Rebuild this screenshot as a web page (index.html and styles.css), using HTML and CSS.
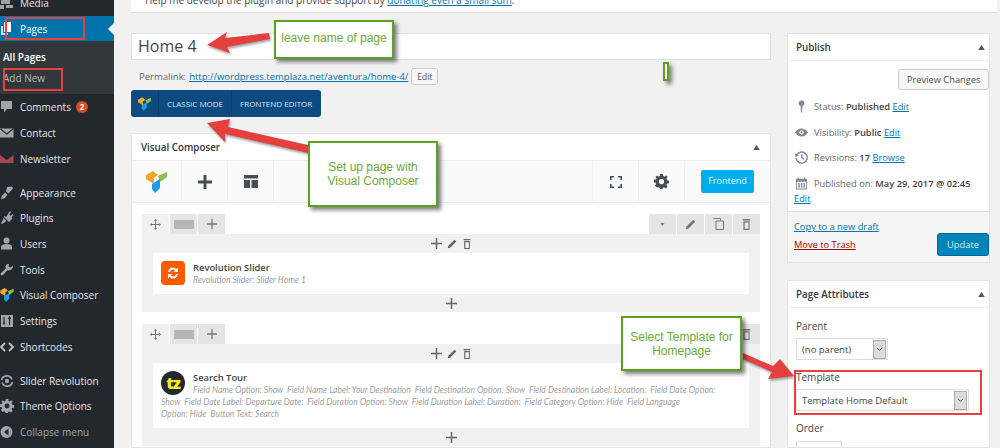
FILE: index.html
```html
<!DOCTYPE html>
<html lang="en">
<head>
    <meta charset="UTF-8">
    <meta name="viewport" content="width=device-width, initial-scale=1.0">
    <title>Edit Page</title>
    <link rel="stylesheet" href="styles.css">
</head>
<body>
    <svg class="defs" width="0" height="0">
        <symbol id="vc-logo" viewBox="0 0 21 22">
            <polygon points="0,4 7,0 12,4 8,7 8,13 0,8" fill="#f0a630"/>
            <polygon points="12,5 21,1 21,6 14,11" fill="#8cc04b"/>
            <polygon points="6,13 14,8 14,17 9,22 6,18" fill="#1b9ee2"/>
        </symbol>
        <symbol id="plus" viewBox="0 0 12 12">
            <path d="M5.200 0h1.600v5.200H12v1.600H6.800V12H5.200V6.800H0V5.200h5.200z" fill="currentColor"/>
        </symbol>
        <symbol id="pencil" viewBox="0 0 12 12">
            <path d="M9 0.8l2.200 2.200-7.400 7.400L.8 11.200l.8-3z" fill="currentColor"/>
        </symbol>
        <symbol id="trash" viewBox="0 0 12 12">
            <path d="M2 0h8v1.600H2zM3 2.500h6.400V12H2.600V2.500zM4 3.800v6.900h4.200V3.800z" fill="currentColor" fill-rule="evenodd"/>
        </symbol>
        <symbol id="move" viewBox="0 0 12 12">
            <path d="M6 0l1.800 2H6.500v3.500H10V4.200L12 6l-2 1.800V6.500H6.500V10h1.300L6 12l-1.800-2h1.300V6.500H2v1.300L0 6l2-1.800v1.300h3.500V2H4.200z" fill="currentColor"/>
        </symbol>
        <symbol id="gear" viewBox="0 0 16 16">
            <path d="M6.600 0h2.800l.4 2.200 1.300.6L13 1.500l1.500 1.500-1.300 1.900.9 1.800 1.900.4v2.800l-2.200.4-.6 1.300 1.300 1.900-2 2-1.900-1.300-1.300.6-.4 2.200H6.600l-.4-2.200-1.300-.6L3 14.500l-2-2 1.300-1.900-.6-1.300L0 8.900V6.100l2.200-.4.6-1.300L1.500 3 3 1.500l1.900 1.300 1.300-.6zM8 5.200a2.800 2.800 0 1 0 0 5.600 2.800 2.800 0 0 0 0-5.600z" fill="currentColor" fill-rule="evenodd"/>
        </symbol>
        <symbol id="caret" viewBox="0 0 8 6">
            <path d="M4 0l4 6H0z" fill="currentColor"/>
        </symbol>
        <symbol id="chevron" viewBox="0 0 8 6">
            <path d="M1 1l3 3 3-3" fill="none" stroke="#555" stroke-width="1.2"/>
        </symbol>
    </svg>

    <nav class="sidebar">
        <ul class="menu">
            <li class="menu-item">
                <svg class="menu-icon" viewBox="0 0 14 14"><path d="M1 0h9v8H1zM6 9h7v3H6zM0 9h4v4H0z" fill="#9ea3a8"/></svg>
                <span>Media</span>
            </li>
            <li class="menu-item current">
                <svg class="menu-icon" viewBox="0 0 14 14"><path d="M1 4h2v7h5v2H1z" fill="#cfe3ee"/><path d="M4 0h7v10H4z" fill="#fff"/></svg>
                <span>Pages</span>
                <span class="menu-pointer"></span>
            </li>
            <li class="submenu">
                <div class="submenu-item active">All Pages</div>
                <div class="submenu-item">Add New</div>
            </li>
            <li class="menu-item">
                <svg class="menu-icon" viewBox="0 0 14 14"><path d="M1 1h11v8H7l-3 3.500V9H1z" fill="#a0a5aa"/></svg>
                <span>Comments</span>
                <span class="count">2</span>
            </li>
            <li class="menu-item">
                <svg class="menu-icon" viewBox="0 0 14 14"><path d="M0 2.500h13.500v9H0z" fill="#a0a5aa"/><path d="M.5 3l6.300 5L13 3" fill="none" stroke="#23282d" stroke-width="1.100"/></svg>
                <span>Contact</span>
            </li>
            <li class="menu-item">
                <svg class="menu-icon" viewBox="0 0 14 14"><path d="M0 3l6.800 5L13.500 3v8H0z" fill="#a6464f"/></svg>
                <span>Newsletter</span>
            </li>
            <li class="menu-item group-start">
                <svg class="menu-icon" viewBox="0 0 14 14"><path d="M7 1l5-.5 1 2-4.500 5-2.500-2zM5 6.500l2.500 2.300L5 12l-4 1.500.8-3.500z" fill="#a0a5aa"/></svg>
                <span>Appearance</span>
            </li>
            <li class="menu-item">
                <svg class="menu-icon" viewBox="0 0 14 14"><path d="M10 0l1.200 1-2 2.500 1.500 1.300L12.500 3l1 1-2 2.500 1 1L9 11 3.500 5.500 4.500 5l1.500 1z" fill="#a0a5aa"/><path d="M3.500 7l3 3-2 1.500L2 13l-1-1 1.500-2.300z" fill="#a0a5aa"/></svg>
                <span>Plugins</span>
            </li>
            <li class="menu-item">
                <svg class="menu-icon" viewBox="0 0 14 14"><circle cx="6.500" cy="3.500" r="3" fill="#a0a5aa"/><path d="M1 12.500V9.500c0-1.500 2.500-2.500 5.500-2.500s5.500 1 5.500 2.500v3z" fill="#a0a5aa"/></svg>
                <span>Users</span>
            </li>
            <li class="menu-item">
                <svg class="menu-icon" viewBox="0 0 14 14"><path d="M13 2.500l-2.500 2-2-1L9 1C7 .5 5.500 2 5.500 4c0 .7.200 1 .3 1.500L1 10c-1.200 1.500.5 3.200 2 2l4.500-4.800c2.800.8 5.800-1.200 5.500-4.700z" fill="#a0a5aa"/></svg>
                <span>Tools</span>
            </li>
            <li class="menu-item">
                <svg class="menu-icon"><use href="#vc-logo"/></svg>
                <span>Visual Composer</span>
            </li>
            <li class="menu-item">
                <svg class="menu-icon" viewBox="0 0 14 14"><path d="M1 1h12v12H1z" fill="#a0a5aa"/><path d="M4 3v8M3 9h2.200M9.500 11V3M8.300 5l1.200-2 1.200 2" fill="none" stroke="#23282d" stroke-width="1.200"/></svg>
                <span>Settings</span>
            </li>
            <li class="menu-item">
                <svg class="menu-icon" viewBox="0 0 14 14"><path d="M5 3L1 7l4 4M9 3l4 4-4 4" fill="none" stroke="#c5c8cb" stroke-width="1.800"/></svg>
                <span>Shortcodes</span>
            </li>
            <li class="menu-item group-start">
                <svg class="menu-icon" viewBox="0 0 14 14"><path d="M1.500 6A5.500 5.500 0 0 1 12 5.500M12.500 8A5.500 5.500 0 0 1 2 8.500" fill="none" stroke="#a0a5aa" stroke-width="1.700"/><circle cx="7" cy="7" r="2.200" fill="#a0a5aa"/></svg>
                <span>Slider Revolution</span>
            </li>
            <li class="menu-item">
                <svg class="menu-icon gear-icon"><use href="#gear"/></svg>
                <span>Theme Options</span>
            </li>
            <li class="menu-item muted">
                <svg class="menu-icon" viewBox="0 0 14 14"><circle cx="6.500" cy="7" r="6" fill="#a0a5aa"/><path d="M8.500 3.500v7L4 7z" fill="#23282d"/></svg>
                <span>Collapse menu</span>
            </li>
        </ul>
    </nav>

    <main class="content">
        <div class="notice">Help me develop the plugin and provide support by <a href="#">donating even a small sum</a>.</div>

        <div class="columns">
            <div class="col-main">
                <div class="title-input">Home 4</div>
                <div class="permalink">
                    <span>Permalink:</span>
                    <a href="#">http://wordpress.templaza.net/aventura/home-4/</a>
                    <span class="mini-btn">Edit</span>
                </div>

                <div class="vc-switch">
                    <span class="vc-switch-logo"><svg width="13" height="14"><use href="#vc-logo"/></svg></span>
                    <span class="vc-switch-cell">CLASSIC MODE</span>
                    <span class="vc-switch-cell">FRONTEND EDITOR</span>
                </div>

                <section class="box vc-box">
                    <header class="box-head">
                        <h2>Visual Composer</h2>
                        <svg class="box-caret"><use href="#caret"/></svg>
                    </header>
                    <div class="vc-toolbar">
                        <span class="tool tool-logo"><svg width="21" height="22"><use href="#vc-logo"/></svg></span>
                        <span class="tool">
                            <svg width="14" height="14" viewBox="0 0 14 14"><path d="M5.500 0h3v5.500H14v3H8.500V14h-3V8.500H0v-3h5.500z" fill="#444e57"/></svg>
                        </span>
                        <span class="tool">
                            <svg width="14" height="13" viewBox="0 0 14 13"><path d="M0 0h14v3.500H0zM0 5h6v8H0zM7.500 5H14v8H7.500z" fill="#444e57"/></svg>
                        </span>
                        <span class="toolbar-space"></span>
                        <span class="tool">
                            <svg width="12" height="12" viewBox="0 0 12 12"><path d="M.8 4V.8H4M8 .8h3.200V4M11.200 8v3.200H8M4 11.200H.8V8" fill="none" stroke="#444e57" stroke-width="1.600"/></svg>
                        </span>
                        <span class="tool">
                            <svg class="tool-gear" width="15" height="15"><use href="#gear"/></svg>
                        </span>
                        <span class="frontend-btn">Frontend</span>
                    </div>

                    <div class="vc-rows">
                        <div class="vc-row">
                            <div class="row-controls">
                                <span class="ctl ctl-move"><svg width="11" height="11"><use href="#move"/></svg></span>
                                <span class="ctl"><span class="layout-bar"></span></span>
                                <span class="ctl"><svg width="10" height="10"><use href="#plus"/></svg></span>
                                <span class="row-controls-space"></span>
                                <span class="ctl"><svg width="5" height="3" class="down"><use href="#caret"/></svg></span>
                                <span class="ctl"><svg width="11" height="11"><use href="#pencil"/></svg></span>
                                <span class="ctl"><svg width="11" height="12" viewBox="0 0 11 12"><path d="M.5.500h7v2M3 3h7.500v8.500H3z" fill="none" stroke="currentColor"/></svg></span>
                                <span class="ctl"><svg width="11" height="11"><use href="#trash"/></svg></span>
                            </div>
                            <div class="row-body">
                                <div class="col-controls">
                                    <svg width="11" height="11"><use href="#plus"/></svg>
                                    <svg width="10" height="10"><use href="#pencil"/></svg>
                                    <svg width="10" height="10"><use href="#trash"/></svg>
                                </div>
                                <div class="card">
                                    <span class="card-icon rev-icon">
                                        <svg width="14" height="14" viewBox="0 0 14 14"><path d="M2 6a5 5 0 0 1 8.500-3l1.500-1.500V6H7.500l1.600-1.600A3 3 0 0 0 4 6zM12 8a5 5 0 0 1-8.500 3L2 12.500V8h4.500l-1.600 1.600A3 3 0 0 0 10 8z" fill="#fff"/></svg>
                                    </span>
                                    <div class="card-title">Revolution Slider</div>
                                    <div class="card-desc">Revolution Slider: Slider Home 1</div>
                                </div>
                                <div class="row-add"><svg width="11" height="11"><use href="#plus"/></svg></div>
                            </div>
                        </div>

                        <div class="vc-row">
                            <div class="row-controls">
                                <span class="ctl ctl-move"><svg width="11" height="11"><use href="#move"/></svg></span>
                                <span class="ctl"><span class="layout-bar"></span></span>
                                <span class="ctl"><svg width="10" height="10"><use href="#plus"/></svg></span>
                                <span class="row-controls-space"></span>
                                <span class="ctl"><svg width="5" height="3" class="down"><use href="#caret"/></svg></span>
                                <span class="ctl"><svg width="11" height="11"><use href="#pencil"/></svg></span>
                                <span class="ctl"><svg width="11" height="12" viewBox="0 0 11 12"><path d="M.5.500h7v2M3 3h7.500v8.500H3z" fill="none" stroke="currentColor"/></svg></span>
                                <span class="ctl"><svg width="11" height="11"><use href="#trash"/></svg></span>
                            </div>
                            <div class="row-body">
                                <div class="col-controls">
                                    <svg width="11" height="11"><use href="#plus"/></svg>
                                    <svg width="10" height="10"><use href="#pencil"/></svg>
                                    <svg width="10" height="10"><use href="#trash"/></svg>
                                </div>
                                <div class="card">
                                    <span class="card-icon tz-icon">tz</span>
                                    <div class="card-title">Search Tour</div>
                                    <div class="card-desc">Field Name Option: Show&nbsp; Field Name Label: Your Destination&nbsp; Field Destination Option: Show&nbsp; Field Destination Label: Location:&nbsp; Field Date Option:<br>Show&nbsp; Field Date Label: Departure Date:&nbsp; Field Duration Option: Show&nbsp; Field Duration Label: Duration:&nbsp; Field Category Option: Hide&nbsp; Field Language<br>Option: Hide&nbsp; Button Text: Search</div>
                                </div>
                                <div class="row-add"><svg width="11" height="11"><use href="#plus"/></svg></div>
                            </div>
                        </div>
                    </div>
                </section>
            </div>

            <aside class="col-side">
                <section class="box">
                    <header class="box-head">
                        <h2>Publish</h2>
                        <svg class="box-caret"><use href="#caret"/></svg>
                    </header>
                    <div class="publish-top"><span class="btn">Preview Changes</span></div>
                    <div class="misc">
                        <svg class="misc-icon" viewBox="0 0 14 14"><circle cx="7" cy="3.500" r="3" fill="#82878c"/><path d="M6 6h2l-.5 7.500h-1z" fill="#82878c"/></svg>
                        <span>Status: <b>Published</b> <a href="#">Edit</a></span>
                    </div>
                    <div class="misc">
                        <svg class="misc-icon" viewBox="0 0 14 14"><path d="M0 7c2-3 4.300-4.200 7-4.200S12 4 14 7c-2 3-4.300 4.200-7 4.200S2 10 0 7z" fill="#82878c"/><circle cx="7" cy="6.800" r="2.300" fill="#fff"/><circle cx="7" cy="6.800" r="1.200" fill="#82878c"/></svg>
                        <span>Visibility: <b>Public</b> <a href="#">Edit</a></span>
                    </div>
                    <div class="misc">
                        <svg class="misc-icon" viewBox="0 0 14 14"><path d="M2 4a6 6 0 1 1-.8 3.500" fill="none" stroke="#82878c" stroke-width="1.500"/><path d="M0 2.500l4.200 2.300L.5 6.500zM6.500 3.500H8v3.300l2.300 1.500-.7 1.100-3.100-2z" fill="#82878c"/></svg>
                        <span>Revisions: <b>17</b> <a href="#">Browse</a></span>
                    </div>
                    <div class="misc">
                        <svg class="misc-icon" viewBox="0 0 14 14"><path d="M1 2h12v11.500H1zM2 5v7.500h10V5z" fill="#82878c" fill-rule="evenodd"/><path d="M3 .5h1.200V3H3zM9.800.500H11V3H9.800zM3.500 6.500h1.500v5H3.500zM6.300 6.500h1.500v5H6.300zM9 6.500h1.500v5H9z" fill="#82878c"/></svg>
                        <span>Published on: <b>May 29, 2017 @ 02:45</b></span>
                    </div>
                    <div class="misc-edit"><a href="#">Edit</a></div>
                    <div class="publish-foot">
                        <div class="foot-links">
                            <a href="#">Copy to a new draft</a>
                            <a href="#" class="trash-link">Move to Trash</a>
                        </div>
                        <span class="btn btn-primary">Update</span>
                    </div>
                </section>

                <section class="box attrs">
                    <header class="box-head">
                        <h2>Page Attributes</h2>
                        <svg class="box-caret"><use href="#caret"/></svg>
                    </header>
                    <div class="attrs-body">
                        <p class="attr-label">Parent</p>
                        <div class="select select-parent">(no parent)<span class="select-arrow"><svg width="7" height="5"><use href="#chevron"/></svg></span></div>
                        <p class="attr-label">Template</p>
                        <div class="select select-template">Template Home Default<span class="select-arrow"><svg width="7" height="5"><use href="#chevron"/></svg></span></div>
                        <p class="attr-label">Order</p>
                        <div class="order-input"></div>
                    </div>
                </section>
            </aside>
        </div>
    </main>

    <!-- annotations drawn over the screenshot -->
    <span class="red-frame frame-pages"></span>
    <span class="red-frame frame-add"></span>
    <span class="red-frame frame-template"></span>

    <svg class="arrows" width="1000" height="448">
        <polygon points="207,45 227,32 225,38 269,33 270,39 227,47 230,53"/>
        <polygon points="207,123 230,119 228,127 308,145 308,153 225,134 225,142"/>
        <polygon points="743,353 773,366 780,359 794,376 768,379 772,372 743,359"/>
    </svg>

    <div class="callout callout-name">leave name of page</div>
    <div class="callout callout-vc">Set up page with<br>Visual Composer</div>
    <div class="callout callout-template">Select Template for<br>Homepage</div>
    <span class="callout callout-stray"></span>
</body>
</html>
```

FILE: styles.css
```css
* {
    box-sizing: border-box;
}
html, body {
    height: 448px;
    margin: 0;
    overflow: hidden;
}
body {
    display: flex;
    position: relative;
    background: #f1f1f1;
    font-family: "Open Sans", sans-serif;
    font-size: 10px;
    color: #555;
}
a {
    color: #0073aa;
}
.defs {
    position: absolute;
}

/* admin menu */
.sidebar {
    flex: 0 0 114px;
    width: 114px;
    height: 448px;
    overflow: hidden;
    background: #23282d;
    color: #e4e6e8;
    font-size: 10px;
}
.menu {
    list-style: none;
    margin: -10px 0 0 0;
    padding: 0;
}
.menu-item {
    display: flex;
    align-items: center;
    gap: 6px;
    height: 25.7px;
    position: relative;
    white-space: nowrap;
}
.menu-icon {
    flex: 0 0 14px;
    width: 14px;
    height: 14px;
}
.gear-icon {
    color: #a0a5aa;
}
.group-start {
    margin-top: 8.300px;
}
.current {
    background: #0073aa;
    color: #fff;
}
.menu-pointer {
    position: absolute;
    right: 0;
    top: 7px;
    border: 6px solid transparent;
    border-right-color: #f1f1f1;
    border-left-width: 0;
}
.muted {
    color: #a0a5aa;
}
.submenu {
    height: 53px;
    padding-top: 6px;
    background: #32373c;
}
.submenu-item {
    height: 21px;
    line-height: 21px;
    padding-left: 3px;
    color: #b4b9be;
}
.submenu-item.active {
    color: #fff;
    font-weight: 600;
}
.count {
    width: 12px;
    height: 12px;
    line-height: 12px;
    margin-left: -1px;
    border-radius: 50%;
    background: #d54e21;
    color: #fff;
    font-size: 8px;
    font-weight: 700;
    text-align: center;
}

/* page content */
.content {
    flex: 1;
    padding-left: 17px;
    min-width: 0;
}
.notice {
    width: 866px;
    height: 23px;
    margin-top: -10px;
    padding: 0 14px;
    line-height: 20px;
    background: #fff;
    border-bottom: 1px solid #e2e2e2;
    font-size: 10px;
    color: #444;
}
.columns {
    display: flex;
    gap: 16px;
    margin-top: 20px;
}
.col-main {
    flex: 0 0 640px;
    min-width: 0;
}
.col-side {
    flex: 0 0 203px;
    min-width: 0;
}
.title-input {
    height: 27px;
    padding-left: 6px;
    line-height: 25px;
    background: #fff;
    border: 1px solid #e2e2e2;
    font-size: 16px;
    color: #3f454b;
}
.permalink {
    display: flex;
    align-items: center;
    gap: 3px;
    height: 17px;
    margin-top: 8px;
    padding-left: 8px;
    font-size: 9.500px;
    color: #666;
}
.mini-btn {
    width: 27px;
    height: 17px;
    line-height: 15px;
    text-align: center;
    background: #f7f7f7;
    border: 1px solid #ccc;
    border-radius: 3px;
    font-size: 8.500px;
    color: #555;
}
.vc-switch {
    display: flex;
    width: 190px;
    height: 27px;
    margin-top: 5px;
    background: #0d4a80;
    border-radius: 3px;
    color: #d5e3ef;
    font-size: 8px;
}
.vc-switch-logo {
    display: flex;
    align-items: center;
    justify-content: center;
    width: 28px;
    border-right: 1px solid #0a3f6f;
}
.vc-switch-cell {
    padding: 0 8px;
    line-height: 27px;
    white-space: nowrap;
    border-right: 1px solid #0a3f6f;
}
.vc-switch-cell:last-child {
    border-right: 0;
}

/* meta boxes */
.box {
    background: #fff;
    border: 1px solid #e5e5e5;
}
.box-head {
    display: flex;
    align-items: center;
    justify-content: space-between;
    height: 27px;
    padding: 0 9px;
    border-bottom: 1px solid #eee;
}
.col-side .box-head {
    padding: 0 3px 0 8px;
}
.box-head h2 {
    margin: 0;
    font-size: 9.800px;
    font-weight: 600;
    color: #32373c;
}
.box-caret {
    width: 7px;
    height: 5px;
    margin-right: 1px;
    color: #555;
}
.vc-box {
    margin-top: 16px;
    height: 315px;
    overflow: hidden;
}
.vc-toolbar {
    display: flex;
    align-items: stretch;
    height: 42px;
    background: #fafafa;
    border-bottom: 1px solid #eee;
}
.tool {
    display: flex;
    align-items: center;
    justify-content: center;
    width: 46px;
    border-right: 1px solid #f0f0f0;
}
.tool-logo {
    width: 50px;
}
.tool-gear {
    color: #444e57;
}
.toolbar-space {
    flex: 1;
    border-right: 1px solid #f0f0f0;
}
.frontend-btn {
    align-self: center;
    width: 53px;
    height: 23px;
    margin: 0 16px;
    line-height: 22px;
    text-align: center;
    background: #00aef0;
    border-radius: 2px;
    font-size: 9px;
    color: #e8f7fe;
}
.vc-rows {
    padding: 11px 10px 0 10px;
}
.vc-row {
    margin-bottom: 12px;
}
.row-controls {
    display: flex;
    gap: 1px;
    height: 20px;
    color: #777;
}
.row-controls-space {
    flex: 1;
}
.ctl {
    display: flex;
    align-items: center;
    justify-content: center;
    width: 27px;
    background: #e5e5e5;
}
.ctl-move {
    background: #f1f1f1;
}
.down {
    transform: rotate(180deg);
}
.layout-bar {
    width: 20px;
    height: 9px;
    background: #b5b5b5;
}
.row-body {
    padding: 0 11px;
    background: #f1f1f1;
    color: #666;
}
.col-controls {
    display: flex;
    align-items: center;
    justify-content: center;
    gap: 5px;
    height: 19px;
}
.card {
    min-height: 41px;
    padding: 8px;
    background: #fff;
}
.card-icon {
    float: left;
    display: flex;
    align-items: center;
    justify-content: center;
    width: 24px;
    height: 24px;
    margin-right: 8px;
}
.rev-icon {
    background: #ff5a00;
    border-radius: 4px;
}
.tz-icon {
    background: #23282d;
    border-radius: 50%;
    color: #f5ee1c;
    font-size: 16px;
    font-weight: 800;
    letter-spacing: -1px;
}
.card-title {
    height: 13px;
    line-height: 13px;
    font-size: 9.400px;
    font-weight: 600;
    color: #444;
}
.card-desc {
    line-height: 12px;
    font-family: "Lato", sans-serif;
    font-size: 8.550px;
    font-style: italic;
    color: #a0a0a0;
    white-space: nowrap;
}
.row-add {
    display: flex;
    align-items: center;
    justify-content: center;
    height: 18px;
}

/* publish box */
.publish-top {
    display: flex;
    justify-content: flex-end;
    padding-top: 8px;
}
.btn {
    height: 21px;
    padding: 0 7.500px;
    line-height: 19px;
    background: #f7f7f7;
    border: 1px solid #ccc;
    border-radius: 3px;
    font-size: 9.300px;
    color: #555;
    white-space: nowrap;
}
.btn-primary {
    width: 52px;
    height: 23px;
    padding: 0;
    line-height: 22px;
    text-align: center;
    background: #0085ba;
    border-color: #006799;
    color: #d8edf6;
}
.misc {
    display: flex;
    align-items: center;
    gap: 6px;
    height: 25.500px;
    padding-left: 7px;
    font-size: 9.300px;
    color: #666;
    white-space: nowrap;
}
.publish-top + .misc {
    margin-top: 4px;
}
.misc b {
    font-weight: 600;
    color: #444;
}
.misc-icon {
    flex: 0 0 13px;
    width: 13px;
    height: 13px;
}
.misc-edit {
    height: 18px;
    margin-top: -3px;
    padding-left: 6px;
    line-height: 12px;
    font-size: 9.300px;
}
.publish-foot {
    display: flex;
    align-items: flex-end;
    justify-content: space-between;
    height: 51px;
    padding: 0 0 6px 6px;
    background: #f5f5f5;
    border-top: 1px solid #ddd;
}
.foot-links {
    display: flex;
    flex-direction: column;
    gap: 5px;
    align-self: flex-start;
    margin-top: 8px;
    font-size: 9.300px;
}
.trash-link {
    color: #a00;
}
.attrs {
    height: 168px;
    margin-top: 17px;
    overflow: hidden;
}
.attrs-body {
    padding: 11px 8px;
}
.attr-label {
    height: 15px;
    margin: 0;
    line-height: 15px;
    font-size: 10px;
    color: #444;
}
.select {
    display: flex;
    align-items: center;
    justify-content: space-between;
    height: 22px;
    margin: 4px 0 10px 0;
    padding: 0 1px 0 5px;
    background: #fff;
    border: 1px solid #ddd;
    font-size: 9.500px;
    color: #444;
}
.select-parent {
    width: 92px;
}
.select-template {
    width: 173px;
}
.select-arrow {
    display: flex;
    align-items: center;
    justify-content: center;
    width: 13px;
    height: 19px;
    background: #dcdcdc;
    border: 1px solid #aaa;
}
.order-input {
    width: 46px;
    height: 22px;
    margin-top: 5px;
    background: #fff;
    border: 1px solid #ddd;
}

/* annotations */
.red-frame {
    position: absolute;
    border: 2px solid #e8403f;
}
.frame-pages {
    left: 5px;
    top: 17px;
    width: 80px;
    height: 23px;
}
.frame-add {
    left: 3px;
    top: 68px;
    width: 60px;
    height: 23px;
}
.frame-template {
    left: 794px;
    top: 370px;
    width: 188px;
    height: 45px;
}
.arrows {
    position: absolute;
    left: 0;
    top: 0;
    fill: #e5403f;
    filter: drop-shadow(1px 2px 1px rgba(0, 0, 0, 0.35));
}
.callout {
    position: absolute;
    display: flex;
    align-items: center;
    justify-content: center;
    background: #fff;
    border: 2px solid #5aa021;
    box-shadow: 3px 3px 4px rgba(0, 0, 0, 0.5);
    font-family: "Liberation Sans", Arial, sans-serif;
    font-size: 12px;
    line-height: 14px;
    color: #6aaa35;
    text-align: center;
}
.callout-name {
    left: 274px;
    top: 20px;
    width: 120px;
    height: 39px;
    padding-bottom: 3px;
}
.callout-vc {
    left: 308px;
    top: 141px;
    width: 130px;
    height: 66px;
}
.callout-template {
    left: 621px;
    top: 316px;
    width: 121px;
    height: 55px;
}
.callout-stray {
    left: 663px;
    top: 62px;
    width: 6px;
    height: 19px;
}
```
